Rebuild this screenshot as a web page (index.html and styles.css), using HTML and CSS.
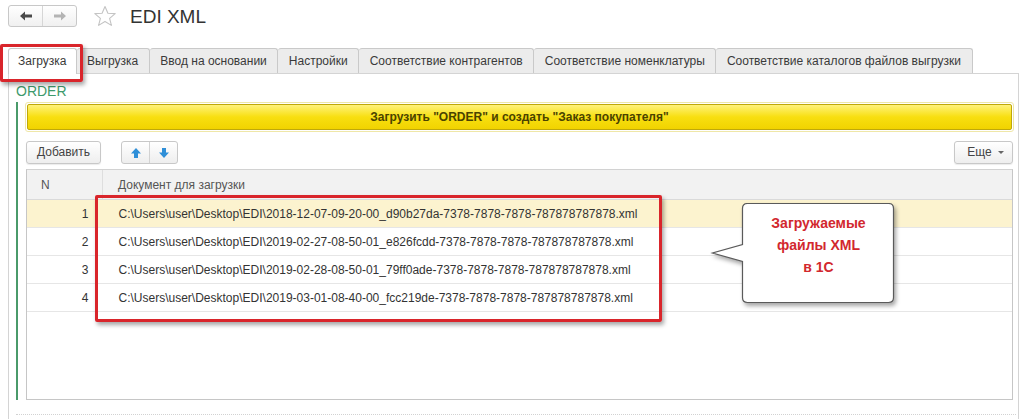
FILE: index.html
```html
<!DOCTYPE html>
<html lang="ru">
<head>
    <meta charset="UTF-8">
    <title>EDI XML</title>
    <link rel="stylesheet" href="styles.css">
</head>
<body>
<div class="page">
    <div class="header">
        <div class="nav">
            <span class="nav-btn">
                <svg width="14" height="12" viewBox="0 0 14 12"><path d="M1 6 L6 1.5 L6 4.5 L13 4.5 L13 7.5 L6 7.5 L6 10.5 Z" fill="#4a4a4a"/></svg>
            </span>
            <span class="nav-btn">
                <svg width="14" height="12" viewBox="0 0 14 12"><path d="M13 6 L8 1.5 L8 4.5 L1 4.5 L1 7.5 L8 7.5 L8 10.5 Z" fill="#b4b4b4"/></svg>
            </span>
        </div>
        <svg class="star" width="24" height="22" viewBox="0 0 24 22"><path d="M12 1.5 L14.9 8.2 L22.2 8.6 L16.6 13.3 L18.4 20.4 L12 16.5 L5.6 20.4 L7.4 13.3 L1.8 8.6 L9.1 8.2 Z" fill="none" stroke="#c4c4c4" stroke-width="1.1" stroke-linejoin="round"/></svg>
        <div class="title">EDI XML</div>
    </div>

    <div class="tabs">
        <div class="tab active">Загрузка</div>
        <div class="tab">Выгрузка</div>
        <div class="tab">Ввод на основании</div>
        <div class="tab">Настройки</div>
        <div class="tab">Соответствие контрагентов</div>
        <div class="tab">Соответствие номенклатуры</div>
        <div class="tab">Соответствие каталогов файлов выгрузки</div>
    </div>

    <div class="panel">
        <div class="group-title">ORDER</div>
        <div class="group">
            <div class="big-btn-ring">
                <div class="big-btn">Загрузить "ORDER" и создать "Заказ покупателя"</div>
            </div>

            <div class="toolbar">
                <div class="btn">Добавить</div>
                <div class="btn-pair">
                    <span class="pair-part">
                        <svg width="12" height="12" viewBox="0 0 12 12"><path d="M6 1 L11 6.5 L8 6.5 L8 11 L4 11 L4 6.5 L1 6.5 Z" fill="#2f8fd8"/></svg>
                    </span>
                    <span class="pair-part">
                        <svg width="12" height="12" viewBox="0 0 12 12"><path d="M6 11 L11 5.5 L8 5.5 L8 1 L4 1 L4 5.5 L1 5.5 Z" fill="#2f8fd8"/></svg>
                    </span>
                </div>
                <div class="spacer"></div>
                <div class="btn more">Еще <span class="caret"></span></div>
            </div>

            <div class="grid">
                <table>
                    <thead>
                        <tr><th class="col-n">N</th><th>Документ для загрузки</th></tr>
                    </thead>
                    <tbody>
                        <tr class="current"><td class="col-n">1</td><td>C:\Users\user\Desktop\EDI\2018-12-07-09-20-00_d90b27da-7378-7878-7878-787878787878.xml</td></tr>
                        <tr><td class="col-n">2</td><td>C:\Users\user\Desktop\EDI\2019-02-27-08-50-01_e826fcdd-7378-7878-7878-787878787878.xml</td></tr>
                        <tr><td class="col-n">3</td><td>C:\Users\user\Desktop\EDI\2019-02-28-08-50-01_79ff0ade-7378-7878-7878-787878787878.xml</td></tr>
                        <tr><td class="col-n">4</td><td>C:\Users\user\Desktop\EDI\2019-03-01-08-40-00_fcc219de-7378-7878-7878-787878787878.xml</td></tr>
                    </tbody>
                </table>
            </div>
        </div>
        <div class="dots"></div>
    </div>

    <!-- пометки поверх скриншота -->
    <div class="mark mark-tab"></div>
    <div class="mark mark-rows"></div>
    <div class="callout">
        <svg class="callout-shape" width="196" height="110" viewBox="0 0 196 110">
            <path d="M34.5 5.5 Q34.5 0.5 39.5 0.5 L180.5 0.5 Q185.5 0.5 185.5 5.5 L185.5 94.5 Q185.5 99.5 180.5 99.5 L39.5 99.5 Q34.5 99.5 34.5 94.5 L34.5 58.5 L4.5 50 L34.5 41.5 Z" fill="#fff" stroke="#5a5a5a" stroke-width="1.2"/>
        </svg>
        <div class="callout-text">Загружаемые<br>файлы XML<br>в 1С</div>
    </div>
</div>
</body>
</html>
```

FILE: styles.css
```css
body {
    margin: 0;
    background: #fff;
    font-family: "Liberation Sans", Arial, sans-serif;
    font-size: 12px;
    color: #333;
}
.page {
    position: relative;
    width: 1024px;
    height: 419px;
    overflow: hidden;
}
.header {
    display: flex;
    align-items: center;
    height: 22px;
    padding: 5px 0 0 8px;
}
.nav {
    display: flex;
    width: 67px;
    height: 20px;
    border: 1px solid #c8c8c8;
    border-radius: 3px;
    background: linear-gradient(#fff, #f0f0f0);
}
.nav-btn {
    flex: 1;
    display: flex;
    align-items: center;
    justify-content: center;
}
.nav-btn + .nav-btn {
    border-left: 1px solid #d6d6d6;
}
.star {
    margin-left: 16px;
}
.title {
    margin-left: 13px;
    font-size: 19px;
    color: #333;
    padding-top: 1px;
}
.tabs {
    display: flex;
    margin: 21px 0 0 8px;
    height: 25px;
}
.tab {
    box-sizing: border-box;
    height: 25px;
    line-height: 24px;
    padding: 0 10.5px;
    background: #ececec;
    border: 1px solid #c9c9c9;
    border-bottom: none;
    border-radius: 3px 3px 0 0;
    color: #3a3a3a;
    white-space: nowrap;
}
.tab + .tab {
    border-left: none;
}
.tab.active {
    padding: 0 9px;
    background: #fff;
    height: 26px;
    margin-bottom: -1px;
    position: relative;
    z-index: 1;
}
.panel {
    margin-left: 8px;
    width: 1011px;
    height: 346px;
    border: 1px solid #d4d4d4;
    border-bottom: none;
    box-sizing: border-box;
    padding: 9px 0 0 7px;
}
.group-title {
    color: #3d9a6c;
    font-size: 14px;
    height: 16px;
    line-height: 16px;
}
.group {
    margin-top: 3px;
    border-left: 2px solid #4a9a6a;
    padding: 0 0 0 8px;
    width: 988px;
    height: 298px;
}
.big-btn-ring {
    margin-left: -1px;
    padding: 1px;
    border: 1px solid #efe7a8;
    border-radius: 3px;
}
.big-btn {
    height: 24px;
    line-height: 24px;
    text-align: center;
    font-weight: bold;
    color: #4a4300;
    background: linear-gradient(#fff27a, #f8df10 50%, #f1d300);
    border: 1px solid #bfa80a;
    border-radius: 2px;
}
.toolbar {
    display: flex;
    align-items: center;
    margin-top: 9px;
    height: 23px;
}
.btn {
    box-sizing: border-box;
    height: 23px;
    line-height: 21px;
    padding: 0 10px;
    border: 1px solid #c8c8c8;
    border-radius: 3px;
    background: linear-gradient(#fff, #eee);
    color: #444;
    box-shadow: 0 1px 1px rgba(0, 0, 0, 0.08);
}
.btn-pair {
    display: flex;
    margin-left: 20px;
    box-sizing: border-box;
    width: 57px;
    height: 23px;
    border: 1px solid #c8c8c8;
    border-radius: 3px;
    background: linear-gradient(#fff, #eee);
}
.pair-part {
    flex: 1;
    display: flex;
    align-items: center;
    justify-content: center;
}
.pair-part + .pair-part {
    border-left: 1px solid #d2d2d2;
}
.spacer {
    flex: 1;
}
.more {
    padding: 0 8px 0 12px;
    margin-right: 1px;
}
.caret {
    display: inline-block;
    margin-left: 3px;
    vertical-align: middle;
    border-left: 3px solid transparent;
    border-right: 3px solid transparent;
    border-top: 3px solid #666;
}
.grid {
    margin-top: 5px;
    box-sizing: border-box;
    width: 987px;
    height: 231px;
    border: 1px solid #c6c6c6;
    border-top-color: #d2d2d2;
}
table {
    width: 100%;
    border-collapse: collapse;
}
th {
    height: 29px;
    background: #f2f2f2;
    font-weight: normal;
    color: #555;
    text-align: left;
    padding: 0 0 0 15px;
    border-bottom: 1px solid #dadada;
}
th.col-n {
    padding-left: 14px;
    border-right: 1px solid #dedede;
}
.col-n {
    width: 61px;
}
td {
    height: 27px;
    padding: 0 0 0 16px;
    border-bottom: 1px solid #e6e6e6;
    color: #333;
    white-space: nowrap;
}
td.col-n {
    text-align: right;
    padding: 0 14px 0 0;
}
tr.current td {
    background: #fcf3cf;
}
.dots {
    margin-top: 14px;
    width: 1000px;
    border-top: 1px dotted #d2d2d2;
}
.mark {
    position: absolute;
    border: 3px solid #d9252b;
    border-radius: 2px;
    box-shadow: 2px 3px 4px rgba(0, 0, 0, 0.35);
}
.mark-tab {
    left: 0;
    top: 44px;
    width: 77px;
    height: 32px;
}
.mark-rows {
    left: 95px;
    top: 195px;
    width: 561px;
    height: 121px;
}
.callout {
    position: absolute;
    left: 708px;
    top: 203px;
    width: 196px;
    height: 110px;
}
.callout-shape {
    position: absolute;
    left: 0;
    top: 0;
    filter: drop-shadow(2px 3px 2px rgba(0, 0, 0, 0.35));
}
.callout-text {
    position: absolute;
    left: 35px;
    top: 9px;
    width: 151px;
    text-align: center;
    color: #d2282e;
    font-weight: bold;
    font-size: 14px;
    line-height: 22px;
}
```
